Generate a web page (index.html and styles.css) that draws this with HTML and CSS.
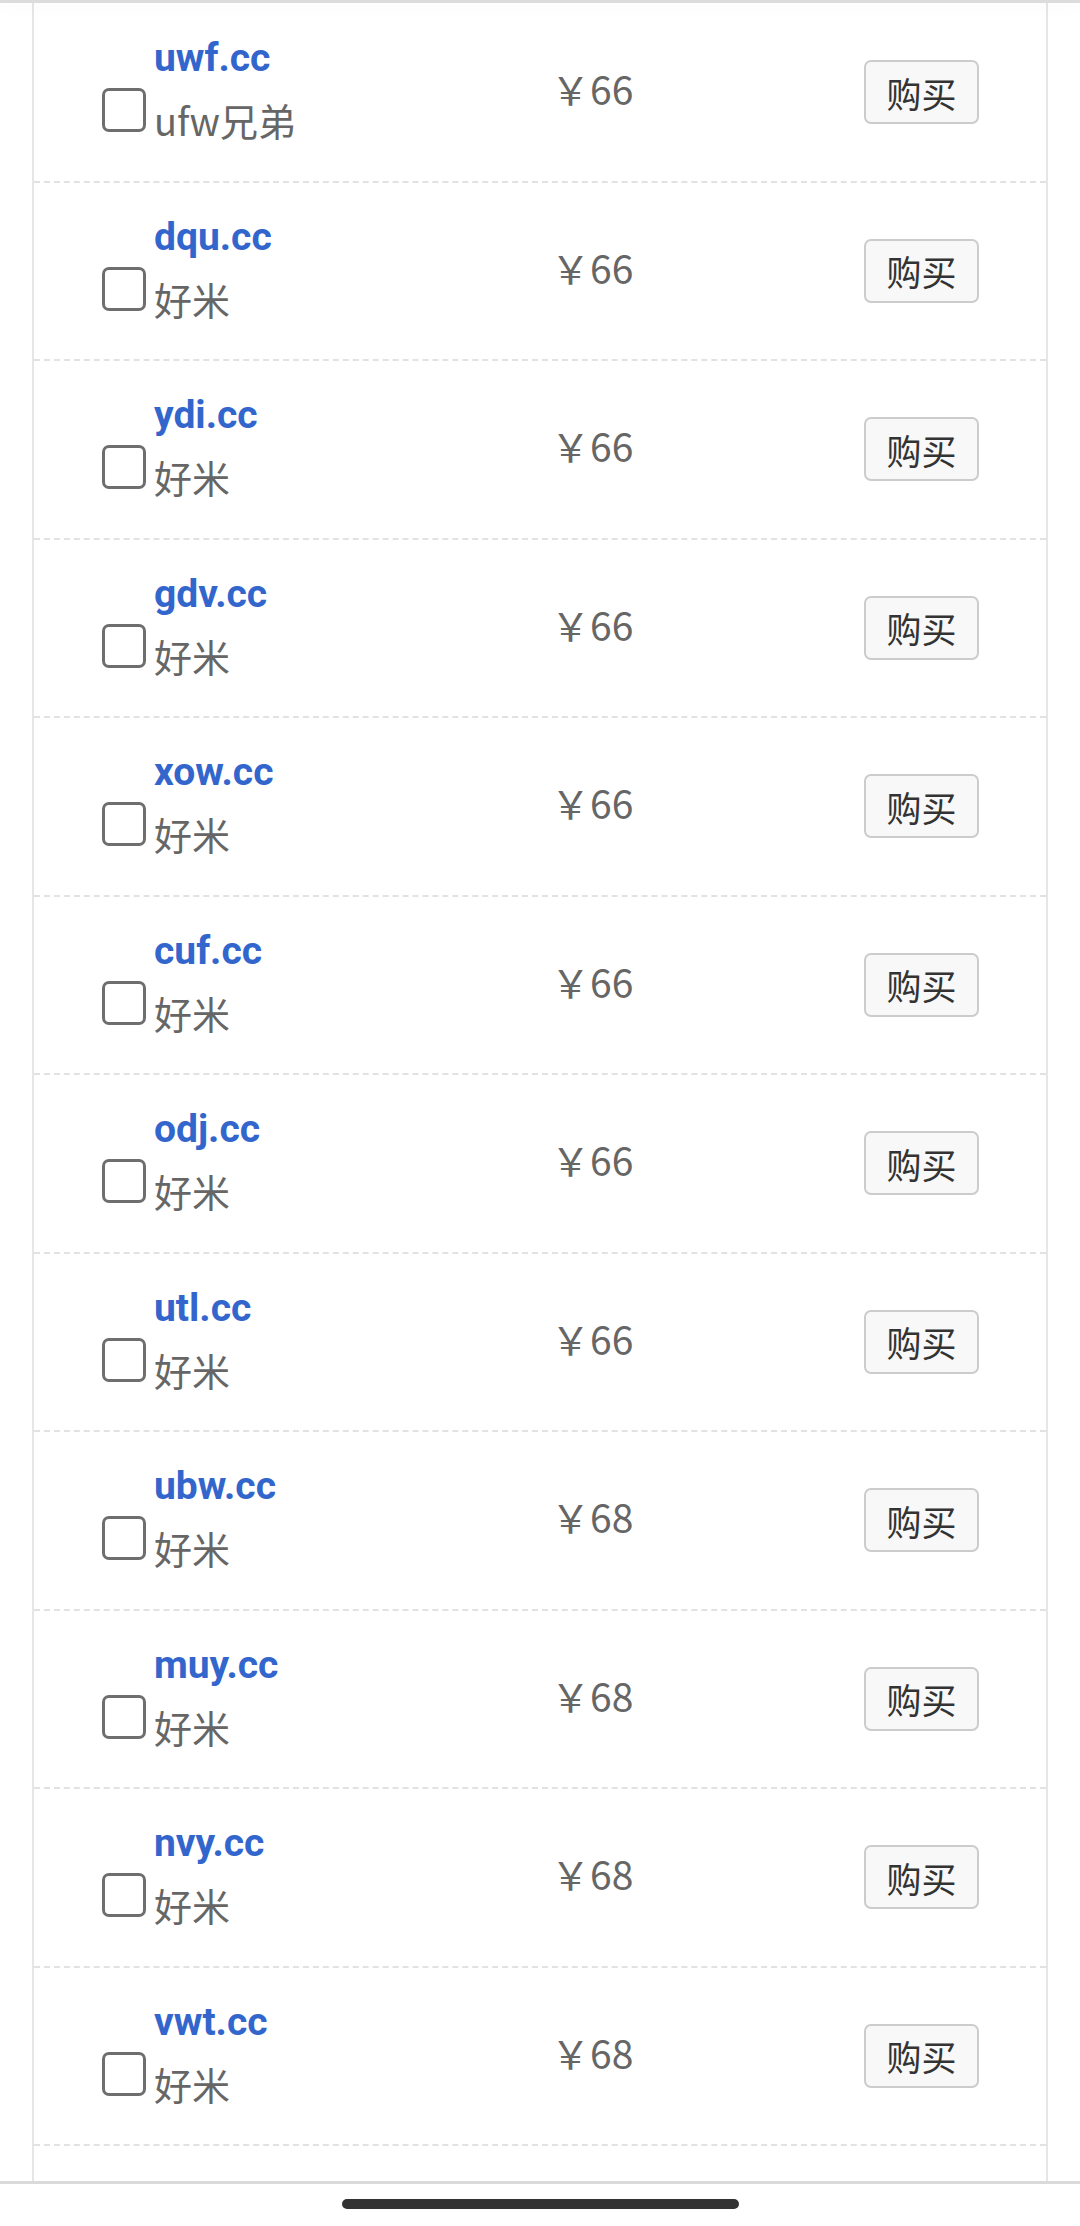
FILE: index.html
```html
<!DOCTYPE html>
<html lang="zh-CN">
<head>
<meta charset="utf-8">
<title>域名列表</title>
<link rel="stylesheet" href="styles.css">
</head>
<body>
<div class="topbar"></div>
<main class="main">
  <ul class="list">
    <li class="row">
      <label class="name"><input type="checkbox" class="check"><span class="text"><a class="domain">uwf.cc</a><span class="desc">ufw兄弟</span></span></label>
      <span class="price">￥66</span>
      <button class="buy">购买</button>
    </li>
    <li class="row">
      <label class="name"><input type="checkbox" class="check"><span class="text"><a class="domain">dqu.cc</a><span class="desc">好米</span></span></label>
      <span class="price">￥66</span>
      <button class="buy">购买</button>
    </li>
    <li class="row">
      <label class="name"><input type="checkbox" class="check"><span class="text"><a class="domain">ydi.cc</a><span class="desc">好米</span></span></label>
      <span class="price">￥66</span>
      <button class="buy">购买</button>
    </li>
    <li class="row">
      <label class="name"><input type="checkbox" class="check"><span class="text"><a class="domain">gdv.cc</a><span class="desc">好米</span></span></label>
      <span class="price">￥66</span>
      <button class="buy">购买</button>
    </li>
    <li class="row">
      <label class="name"><input type="checkbox" class="check"><span class="text"><a class="domain">xow.cc</a><span class="desc">好米</span></span></label>
      <span class="price">￥66</span>
      <button class="buy">购买</button>
    </li>
    <li class="row">
      <label class="name"><input type="checkbox" class="check"><span class="text"><a class="domain">cuf.cc</a><span class="desc">好米</span></span></label>
      <span class="price">￥66</span>
      <button class="buy">购买</button>
    </li>
    <li class="row">
      <label class="name"><input type="checkbox" class="check"><span class="text"><a class="domain">odj.cc</a><span class="desc">好米</span></span></label>
      <span class="price">￥66</span>
      <button class="buy">购买</button>
    </li>
    <li class="row">
      <label class="name"><input type="checkbox" class="check"><span class="text"><a class="domain">utl.cc</a><span class="desc">好米</span></span></label>
      <span class="price">￥66</span>
      <button class="buy">购买</button>
    </li>
    <li class="row">
      <label class="name"><input type="checkbox" class="check"><span class="text"><a class="domain">ubw.cc</a><span class="desc">好米</span></span></label>
      <span class="price">￥68</span>
      <button class="buy">购买</button>
    </li>
    <li class="row">
      <label class="name"><input type="checkbox" class="check"><span class="text"><a class="domain">muy.cc</a><span class="desc">好米</span></span></label>
      <span class="price">￥68</span>
      <button class="buy">购买</button>
    </li>
    <li class="row">
      <label class="name"><input type="checkbox" class="check"><span class="text"><a class="domain">nvy.cc</a><span class="desc">好米</span></span></label>
      <span class="price">￥68</span>
      <button class="buy">购买</button>
    </li>
    <li class="row">
      <label class="name"><input type="checkbox" class="check"><span class="text"><a class="domain">vwt.cc</a><span class="desc">好米</span></span></label>
      <span class="price">￥68</span>
      <button class="buy">购买</button>
    </li>
  </ul>
</main>
<footer class="navbar"><span class="home-indicator"></span></footer>
</body>
</html>
```
FILE: styles.css
```css
* { box-sizing: border-box; }
html, body {
  margin: 0;
  padding: 0;
  background: #ffffff;
}
body {
  width: 1080px;
  height: 2226px;
  overflow: hidden;
  font-family: Roboto, "Noto Sans CJK SC", sans-serif;
  display: flex;
  flex-direction: column;
}
.topbar {
  position: relative;
  z-index: 2;
  height: 3px;
  flex: none;
  background: #dcdcdc;
  box-shadow: 0 3px 18px rgba(0, 0, 0, 0.07);
}
.main {
  flex: none;
  height: 2178px;
  overflow: hidden;
  margin: 0 32px;
  border-left: 2px solid #e6e6e6;
  border-right: 2px solid #e6e6e6;
  padding-top: 1px;
}
.list {
  list-style: none;
  margin: 0;
  padding: 0;
}
.row {
  height: 178.5px;
  border-bottom: 2px dashed #e2e2e2;
  display: grid;
  grid-template-columns: 449px 313px 115px;
  align-items: center;
  padding-left: 68px;
}
.name {
  display: flex;
  align-items: flex-end;
  gap: 8px;
  padding-bottom: 6px;
}
.check {
  appearance: none;
  -webkit-appearance: none;
  margin: 0 0 18px 0;
  width: 44px;
  height: 44px;
  border: 3px solid #6e6e6e;
  border-radius: 7px;
  background: #ffffff;
  flex: none;
}
.text {
  display: flex;
  flex-direction: column;
  line-height: 61px;
}
.domain {
  font-family: Roboto, "Noto Sans CJK SC", sans-serif;
  font-weight: 700;
  font-size: 39px;
  color: #3366cc;
  text-decoration: none;
}
.desc {
  font-family: "Noto Sans CJK SC", sans-serif;
  font-size: 38px;
  color: #666666;
}
.price {
  font-family: "Noto Sans CJK SC", sans-serif;
  font-size: 39px;
  color: #666666;
  padding-bottom: 8px;
}
.buy {
  width: 115px;
  height: 64px;
  margin: 0;
  padding: 0;
  border: 2px solid #cccccc;
  border-radius: 7px;
  background: #f8f8f8;
  color: #333333;
  font-family: "Noto Sans CJK SC", sans-serif;
  font-size: 35px;
  line-height: 1;
}
.navbar {
  flex: none;
  height: 45px;
  border-top: 3px solid #dadada;
  display: flex;
  justify-content: center;
  padding-top: 15px;
}
.home-indicator {
  display: block;
  width: 397px;
  height: 10px;
  border-radius: 5px;
  background: #333333;
}
```
